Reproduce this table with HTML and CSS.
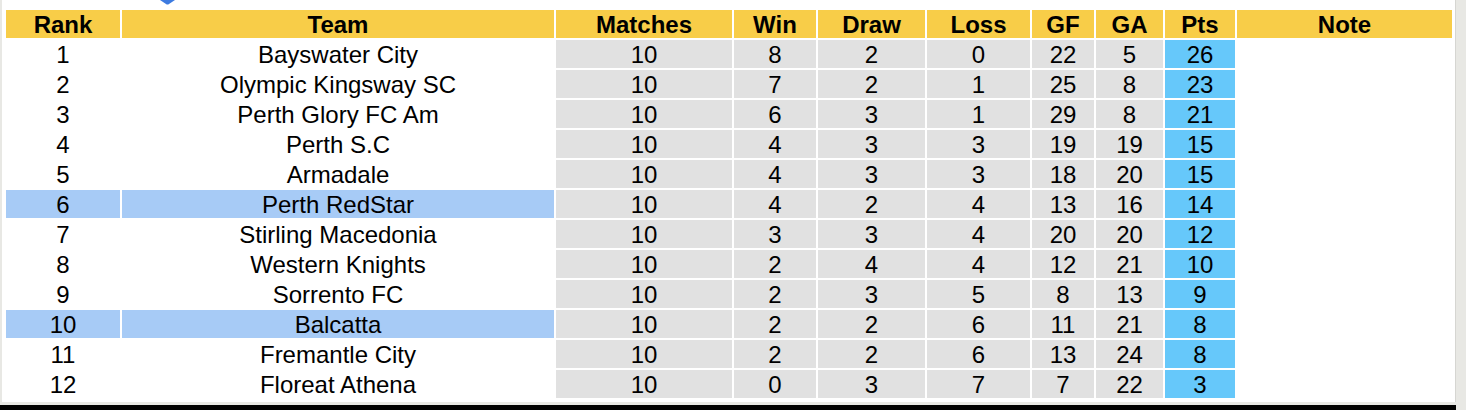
FILE: index.html
```html
<!DOCTYPE html>
<html>
<head>
<meta charset="utf-8">
<link rel="stylesheet" href="styles.css">
</head>
<body>
<div class="page">
  <svg class="marker" width="16" height="5" viewBox="0 0 16 5"><path d="M0 0 H15 L9 4 Q7.5 5 6 4 Z" fill="#3d7be0"/></svg>
  <table class="standings">
    <colgroup>
      <col class="c-rank"><col class="c-team"><col class="c-matches"><col class="c-win"><col class="c-draw"><col class="c-loss"><col class="c-gf"><col class="c-ga"><col class="c-pts"><col class="c-note">
    </colgroup>
    <thead>
      <tr><th>Rank</th><th>Team</th><th>Matches</th><th>Win</th><th>Draw</th><th>Loss</th><th>GF</th><th>GA</th><th>Pts</th><th>Note</th></tr>
    </thead>
    <tbody>
      <tr><td>1</td><td>Bayswater City</td><td class="g">10</td><td class="g">8</td><td class="g">2</td><td class="g">0</td><td class="g">22</td><td class="g">5</td><td class="p">26</td><td></td></tr>
      <tr><td>2</td><td>Olympic Kingsway SC</td><td class="g">10</td><td class="g">7</td><td class="g">2</td><td class="g">1</td><td class="g">25</td><td class="g">8</td><td class="p">23</td><td></td></tr>
      <tr><td>3</td><td>Perth Glory FC Am</td><td class="g">10</td><td class="g">6</td><td class="g">3</td><td class="g">1</td><td class="g">29</td><td class="g">8</td><td class="p">21</td><td></td></tr>
      <tr><td>4</td><td>Perth S.C</td><td class="g">10</td><td class="g">4</td><td class="g">3</td><td class="g">3</td><td class="g">19</td><td class="g">19</td><td class="p">15</td><td></td></tr>
      <tr><td>5</td><td>Armadale</td><td class="g">10</td><td class="g">4</td><td class="g">3</td><td class="g">3</td><td class="g">18</td><td class="g">20</td><td class="p">15</td><td></td></tr>
      <tr class="hl"><td>6</td><td>Perth RedStar</td><td class="g">10</td><td class="g">4</td><td class="g">2</td><td class="g">4</td><td class="g">13</td><td class="g">16</td><td class="p">14</td><td class="n"></td></tr>
      <tr><td>7</td><td>Stirling Macedonia</td><td class="g">10</td><td class="g">3</td><td class="g">3</td><td class="g">4</td><td class="g">20</td><td class="g">20</td><td class="p">12</td><td></td></tr>
      <tr><td>8</td><td>Western Knights</td><td class="g">10</td><td class="g">2</td><td class="g">4</td><td class="g">4</td><td class="g">12</td><td class="g">21</td><td class="p">10</td><td></td></tr>
      <tr><td>9</td><td>Sorrento FC</td><td class="g">10</td><td class="g">2</td><td class="g">3</td><td class="g">5</td><td class="g">8</td><td class="g">13</td><td class="p">9</td><td></td></tr>
      <tr class="hl"><td>10</td><td>Balcatta</td><td class="g">10</td><td class="g">2</td><td class="g">2</td><td class="g">6</td><td class="g">11</td><td class="g">21</td><td class="p">8</td><td class="n"></td></tr>
      <tr><td>11</td><td>Fremantle City</td><td class="g">10</td><td class="g">2</td><td class="g">2</td><td class="g">6</td><td class="g">13</td><td class="g">24</td><td class="p">8</td><td></td></tr>
      <tr><td>12</td><td>Floreat Athena</td><td class="g">10</td><td class="g">0</td><td class="g">3</td><td class="g">7</td><td class="g">7</td><td class="g">22</td><td class="p">3</td><td></td></tr>
    </tbody>
  </table>
</div>
<div class="bottom-bar"></div>
</body>
</html>
```
FILE: styles.css
```css
html, body {
  margin: 0;
  padding: 0;
}
body {
  background: #e8e8e4;
  width: 1466px;
  height: 410px;
  overflow: hidden;
  font-family: "Liberation Sans", Arial, sans-serif;
}
.page {
  position: relative;
  margin-left: 2px;
  width: 1454px;
  height: 402px;
  background: #ffffff;
  padding: 8px 0 0 2px;
  box-sizing: border-box;
  border-right: 1px solid #d6d6d2;
}
.marker {
  position: absolute;
  left: 158px;
  top: 0;
  display: block;
}
.standings {
  border-collapse: separate;
  border-spacing: 2px;
  table-layout: fixed;
  width: 1450px;
  margin: 0;
}
.c-rank { width: 114px; }
.c-team { width: 432px; }
.c-matches { width: 176px; }
.c-win { width: 82px; }
.c-draw { width: 107px; }
.c-loss { width: 103px; }
.c-gf { width: 62px; }
.c-ga { width: 67px; }
.c-pts { width: 70px; }
.c-note { width: 215px; }
.standings th,
.standings td {
  padding: 1px 0 0 0;
  height: 27px;
  text-align: center;
  vertical-align: middle;
  font-size: 24px;
  line-height: 27px;
  color: #000;
  white-space: nowrap;
  overflow: hidden;
}
.standings th {
  background: #f8cd48;
  font-weight: bold;
}
.standings td.g {
  background: #e1e1e1;
}
.standings td.p {
  background: #66c8fa;
}
.standings tr.hl td:nth-child(1),
.standings tr.hl td:nth-child(2) {
  background: #a7cbf6;
}
.bottom-bar {
  margin-top: 3px;
  width: 1456px;
  height: 5px;
  background: #000;
}
```
